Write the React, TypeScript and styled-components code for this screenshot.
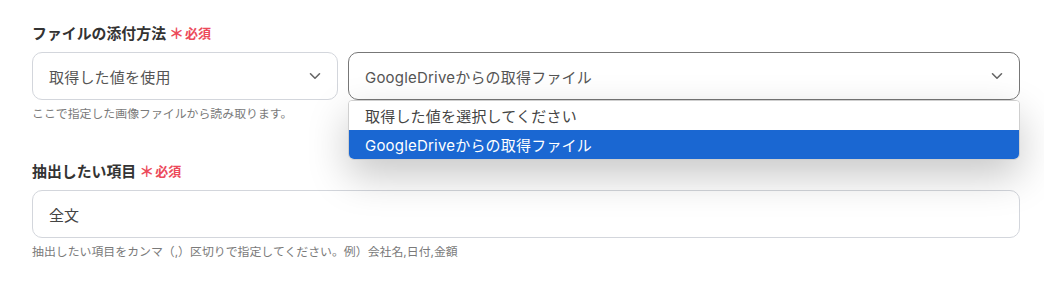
import styled, { createGlobalStyle } from "styled-components";

const GlobalStyle = createGlobalStyle`
  body {
    margin: 0;
    background: #ffffff;
    font-family: "Inter", "Noto Sans CJK JP", sans-serif;
  }
`;

const Page = styled.div`
  width: 1044px;
  height: 293px;
  box-sizing: border-box;
  padding: 24px 24px 0 32px;
  overflow: hidden;
`;

const Field = styled.div<{ $gap?: number }>`
  margin-top: ${(p) => p.$gap ?? 0}px;
`;

const Label = styled.div`
  display: flex;
  align-items: center;
  height: 16px;
  font-size: 14.9px;
  font-weight: 700;
  color: #333333;
  margin-bottom: 12px;
`;

const Required = styled.span`
  display: inline-flex;
  align-items: center;
  margin-left: 3px;
  color: #ec4a5a;
  font-size: 13px;
  font-weight: 700;
`;

const Star = styled.span`
  font-family: "Noto Sans CJK JP", sans-serif;
  font-size: 15px;
  font-weight: 700;
  margin-right: 1px;
  line-height: 1;
`;

const Row = styled.div`
  display: flex;
  gap: 10px;
`;

const SelectBox = styled.div<{ $open?: boolean; $width?: number }>`
  position: relative;
  box-sizing: border-box;
  height: 48px;
  ${(p) => (p.$width ? `width: ${p.$width}px; flex: none;` : "flex: 1;")}
  border: 1px solid ${(p) => (p.$open ? "#777777" : "#d3d6dc")};
  border-radius: 10px;
  background: #ffffff;
  display: flex;
  align-items: center;
  padding: 0 16px;
  font-size: 15px;
  color: #555555;
`;

const SelectText = styled.span`
  flex: 1;
  letter-spacing: 0.2px;
`;

const Menu = styled.div`
  position: absolute;
  left: -1px;
  right: -1px;
  top: calc(100% + 1px);
  background: #ffffff;
  border: 1px solid #cfcfcf;
  border-radius: 4px 4px 6px 6px;
  box-shadow: 0 16px 40px rgba(0, 0, 0, 0.22);
  overflow: hidden;
  z-index: 2;
`;

const Option = styled.div<{ $active?: boolean }>`
  height: 29px;
  display: flex;
  align-items: center;
  padding: 0 16px;
  font-size: 15px;
  letter-spacing: 0.2px;
  background: ${(p) => (p.$active ? "#1a67d2" : "#ffffff")};
  color: ${(p) => (p.$active ? "#ffffff" : "#444444")};
`;

const Input = styled.div`
  box-sizing: border-box;
  height: 48px;
  border: 1px solid #d3d6dc;
  border-radius: 10px;
  display: flex;
  align-items: center;
  padding: 0 16px;
  font-size: 15px;
  color: #444444;
`;

const Help = styled.div`
  margin-top: 6px;
  height: 16px;
  line-height: 16px;
  font-size: 11.9px;
  color: #7a7a7a;
`;

const Chevron = () => (
  <svg width="12" height="8" viewBox="0 0 12 8" fill="none">
    <path d="M1.5 1.8L6 6.2L10.5 1.8" stroke="#666666" strokeWidth="1.6" strokeLinecap="round" strokeLinejoin="round" />
  </svg>
);

export default function App() {
  return (
    <>
      <GlobalStyle />
      <Page>
        <Field>
          <Label>
            ファイルの添付方法
            <Required>
              <Star>＊</Star>必須
            </Required>
          </Label>
          <Row>
            <SelectBox $width={306}>
              <SelectText>取得した値を使用</SelectText>
              <Chevron />
            </SelectBox>
            <SelectBox $open>
              <SelectText>GoogleDriveからの取得ファイル</SelectText>
              <Chevron />
              <Menu>
                <Option>取得した値を選択してください</Option>
                <Option $active>GoogleDriveからの取得ファイル</Option>
              </Menu>
            </SelectBox>
          </Row>
          <Help>ここで指定した画像ファイルから読み取ります。</Help>
        </Field>
        <Field $gap={40}>
          <Label>
            抽出したい項目
            <Required>
              <Star>＊</Star>必須
            </Required>
          </Label>
          <Input>全文</Input>
          <Help>抽出したい項目をカンマ（,）区切りで指定してください。例）会社名,日付,金額</Help>
        </Field>
      </Page>
    </>
  );
}
